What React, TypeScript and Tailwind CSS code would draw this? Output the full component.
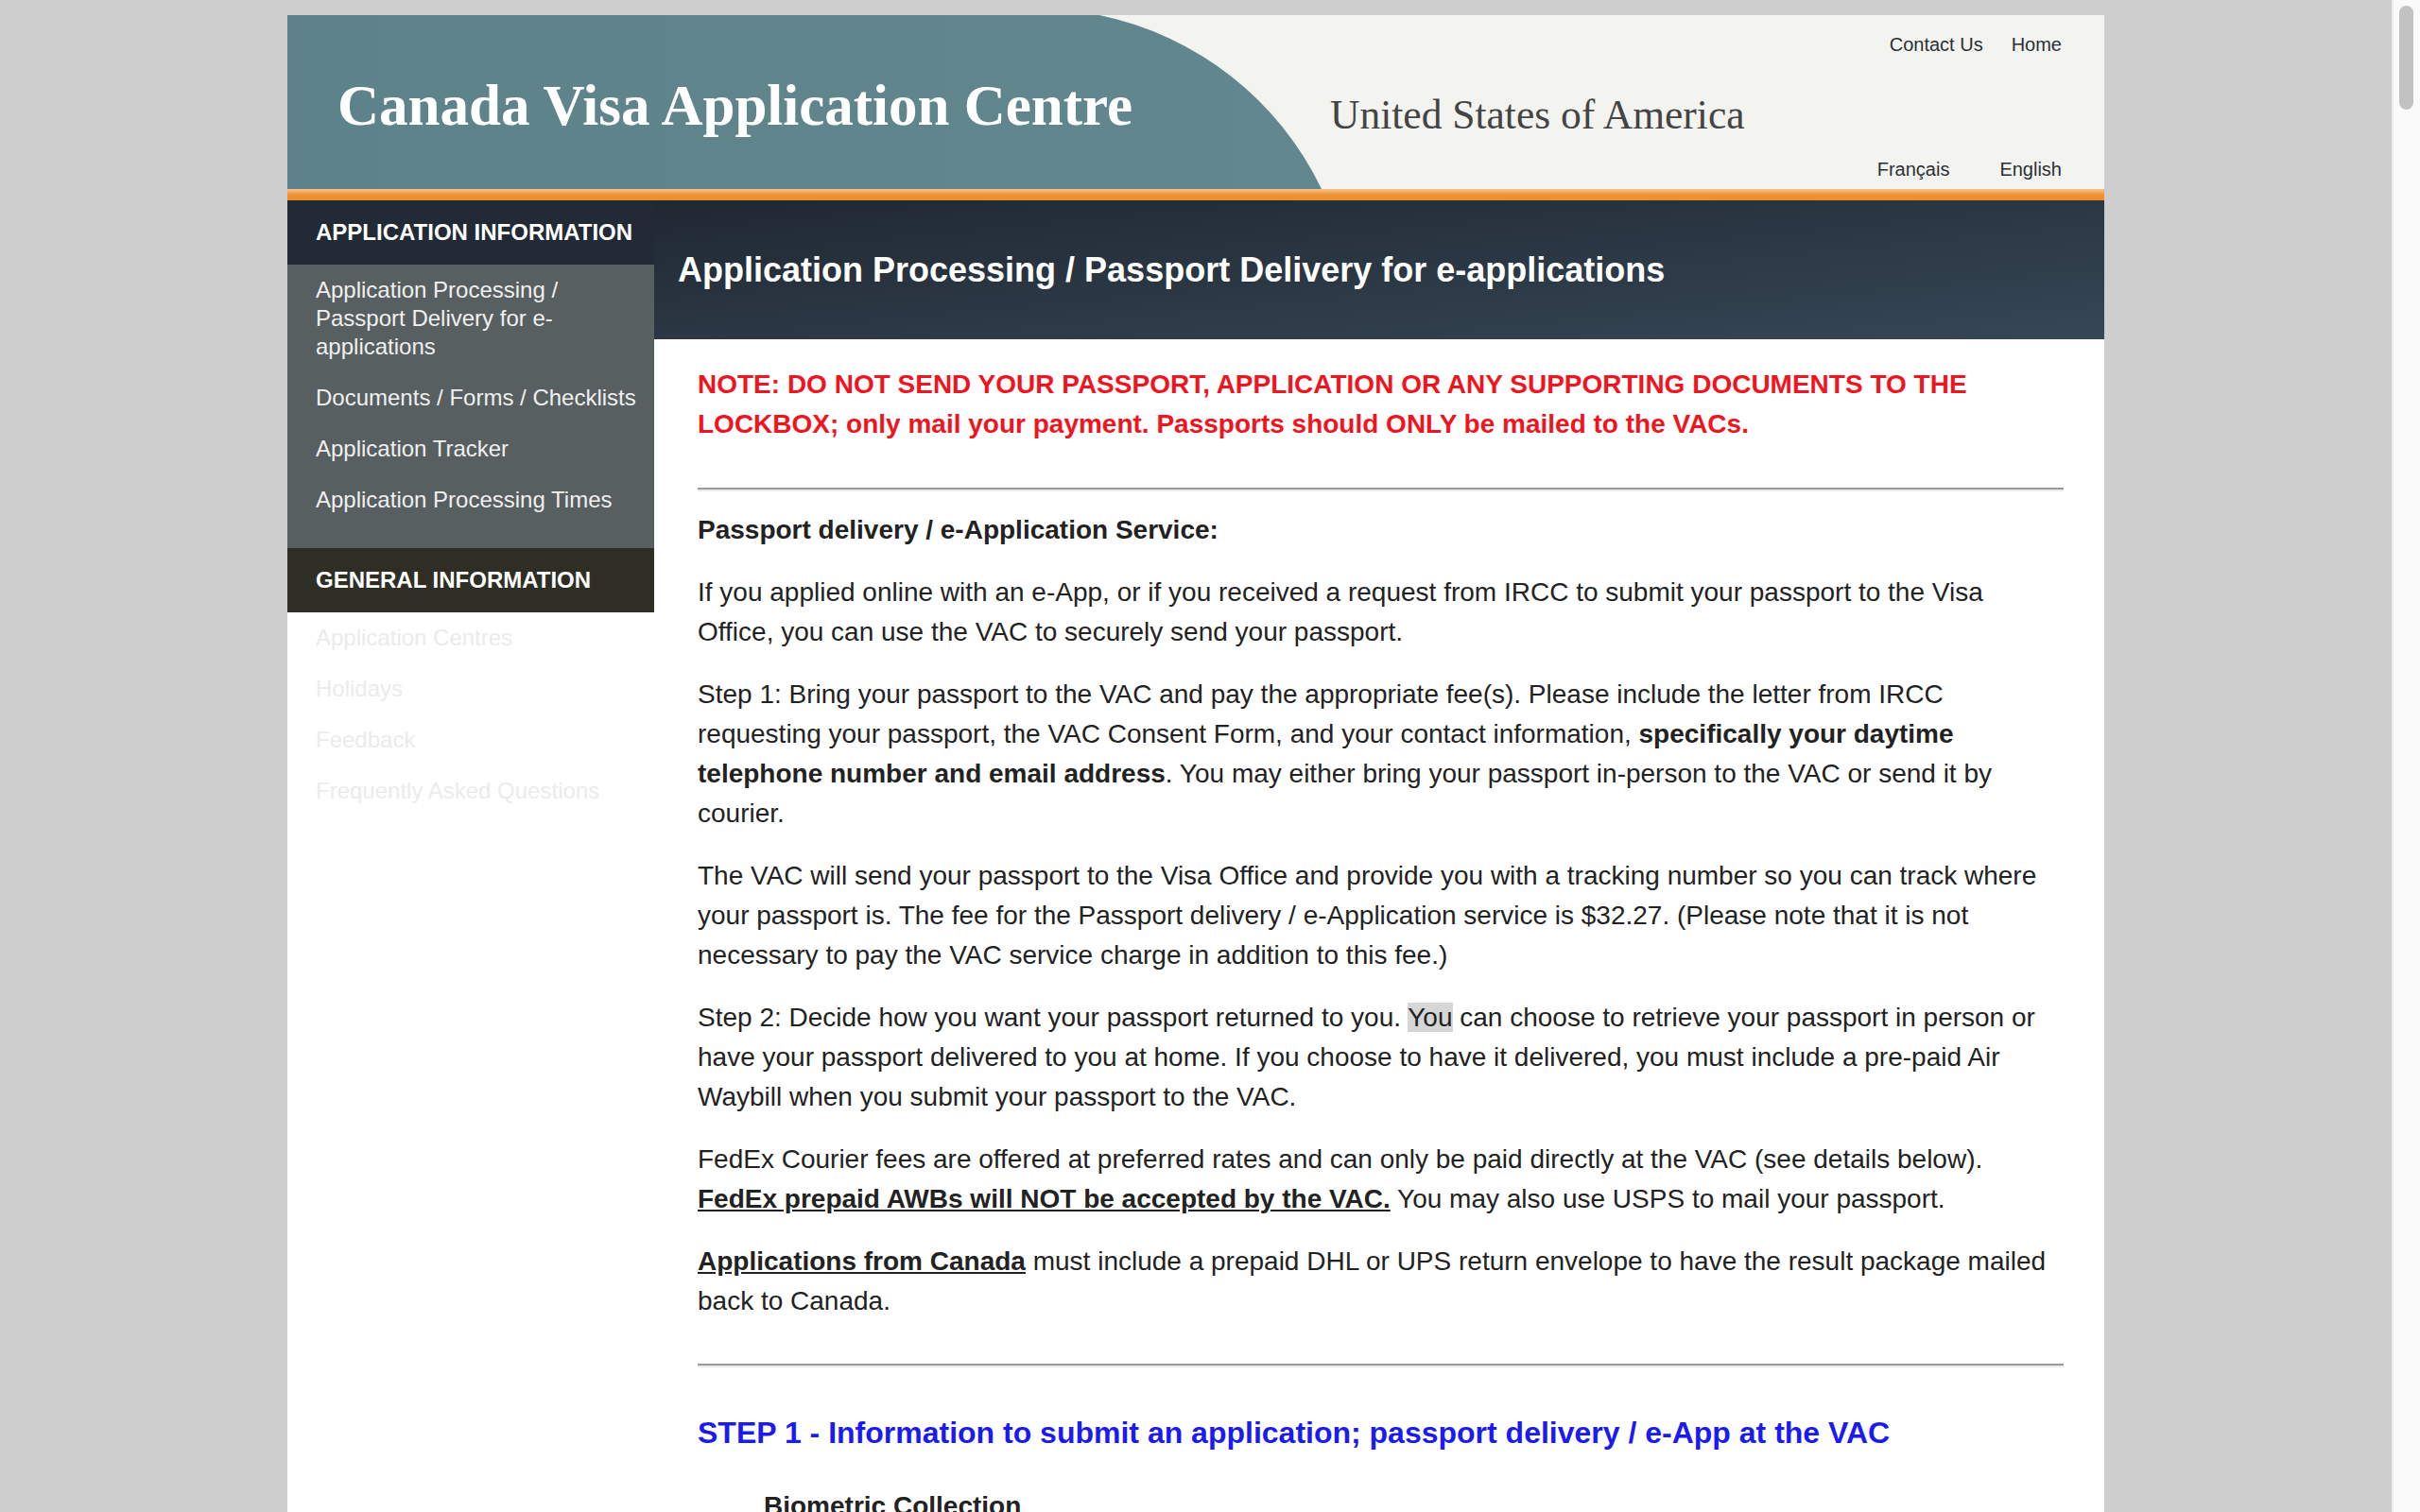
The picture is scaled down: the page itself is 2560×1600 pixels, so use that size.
const sans = { fontFamily: '"Liberation Sans", Arial, sans-serif' };

function SideItem({ label, dim }: { label: string; dim?: boolean }) {
  return (
    <li className={`py-3 pl-[30px] pr-[15px] text-[24px] leading-[30px] ${dim ? "text-[#ebebeb]" : "text-[#f0f0f0]"}`}>
      <a href="#">{label}</a>
    </li>
  );
}

function Header() {
  return (
    <header className="relative h-[184px] overflow-hidden bg-[#f3f3ef]">
      <svg className="absolute inset-0" width="1922" height="184" viewBox="0 0 1922 184">
        <defs>
          <linearGradient id="teal" x1="0" y1="0" x2="1" y2="0">
            <stop offset="0" stopColor="#5d828a" />
            <stop offset="1" stopColor="#62878f" />
          </linearGradient>
        </defs>
        <path d="M0 0 H859 A336 336 0 0 1 1094 184 H0 Z" fill="url(#teal)" />
      </svg>
      <div className="relative flex h-full">
        <div className="w-[1103px] shrink-0 pl-[53px] pt-[65px]">
          <h1
            className="text-[61px] font-bold leading-none text-white"
            style={{ fontFamily: '"Liberation Serif", Georgia, serif' }}
          >
            Canada Visa Application Centre
          </h1>
        </div>
        <div className="pt-[84px]">
          <p
            className="text-[43.5px] leading-none text-[#444]"
            style={{ fontFamily: '"Liberation Serif", Georgia, serif' }}
          >
            United States of America
          </p>
        </div>
        <div className="ml-auto flex flex-col items-end justify-between pb-[11px] pr-[45px] pt-[21px] text-[20px] leading-none text-[#2a2f36]">
          <div className="flex gap-[30px]">
            <a href="#">Contact Us</a>
            <a href="#">Home</a>
          </div>
          <div className="flex gap-[53px]">
            <a href="#">Français</a>
            <a href="#">English</a>
          </div>
        </div>
      </div>
    </header>
  );
}

function Sidebar() {
  return (
    <aside className="w-[388px] shrink-0">
      <h2 className="flex h-[68px] items-center bg-[#222a35] pl-[30px] text-[24px] font-bold text-white">
        APPLICATION INFORMATION
      </h2>
      <ul className="bg-[#575f60] pb-6">
        <SideItem label="Application Processing / Passport Delivery for e-applications" />
        <SideItem label="Documents / Forms / Checklists" />
        <SideItem label="Application Tracker" />
        <SideItem label="Application Processing Times" />
      </ul>
      <h2 className="flex h-[68px] items-center bg-[#2f2e25] pl-[30px] text-[24px] font-bold text-white">
        GENERAL INFORMATION
      </h2>
      <ul>
        <SideItem dim label="Application Centres" />
        <SideItem dim label="Holidays" />
        <SideItem dim label="Feedback" />
        <SideItem dim label="Frequently Asked Questions" />
      </ul>
    </aside>
  );
}

function Rule() {
  return <hr className="border-0 border-t-2 border-b-2 border-t-[#9a9a9a] border-b-[#ececec]" />;
}

export default function App() {
  return (
    <div className="flex h-screen overflow-hidden bg-[#cecece]" style={sans}>
      <div className="flex-1 overflow-hidden pt-4">
        <div className="mx-auto w-[1922px] bg-white">
          <Header />
          <div className="h-3 bg-linear-to-b from-[#f4c48a] via-[#ee9232] to-[#ec8e2c]" />
          <div className="flex">
            <Sidebar />
            <main className="min-w-0 flex-1">
              <div className="flex h-[147px] items-center bg-linear-to-br from-[#202832] to-[#364756] pl-[25px]">
                <h1 className="text-[36px] font-bold text-white">
                  Application Processing / Passport Delivery for e-applications
                </h1>
              </div>
              <div className="pb-20 pl-[46px] pr-[43px] pt-[27px] text-[28px] leading-[42px] text-[#222]">
                <p className="whitespace-nowrap font-bold text-[#f0141e]">
                  NOTE: DO NOT SEND YOUR PASSPORT, APPLICATION OR ANY SUPPORTING DOCUMENTS TO THE
                  <br />
                  LOCKBOX; only mail your payment. Passports should ONLY be mailed to the VACs.
                </p>
                <div className="mb-5 mt-[46px]">
                  <Rule />
                </div>
                <p className="mb-6 font-bold">Passport delivery / e-Application Service:</p>
                <p className="mb-6 whitespace-nowrap">
                  If you applied online with an e-App, or if you received a request from IRCC to submit your passport to the Visa
                  <br />
                  Office, you can use the VAC to securely send your passport.
                </p>
                <p className="mb-6 whitespace-nowrap">
                  Step 1: Bring your passport to the VAC and pay the appropriate fee(s). Please include the letter from IRCC
                  <br />
                  requesting your passport, the VAC Consent Form, and your contact information,{" "}
                  <strong>specifically your daytime</strong>
                  <br />
                  <strong>telephone number and email address</strong>. You may either bring your passport in-person to the VAC or send it by
                  <br />
                  courier.
                </p>
                <p className="mb-6 whitespace-nowrap">
                  The VAC will send your passport to the Visa Office and provide you with a tracking number so you can track where
                  <br />
                  your passport is. The fee for the Passport delivery / e-Application service is $32.27. (Please note that it is not
                  <br />
                  necessary to pay the VAC service charge in addition to this fee.)
                </p>
                <p className="mb-6 whitespace-nowrap">
                  Step 2: Decide how you want your passport returned to you.{" "}
                  <span className="bg-[#d6d6d6]">You</span> can choose to retrieve your passport in person or
                  <br />
                  have your passport delivered to you at home. If you choose to have it delivered, you must include a pre-paid Air
                  <br />
                  Waybill when you submit your passport to the VAC.
                </p>
                <p className="mb-6 whitespace-nowrap">
                  FedEx Courier fees are offered at preferred rates and can only be paid directly at the VAC (see details below).
                  <br />
                  <a href="#" className="font-bold underline">
                    FedEx prepaid AWBs will NOT be accepted by the VAC.
                  </a>{" "}
                  You may also use USPS to mail your passport.
                </p>
                <p className="whitespace-nowrap">
                  <a href="#" className="font-bold underline">
                    Applications from Canada
                  </a>{" "}
                  must include a prepaid DHL or UPS return envelope to have the result package mailed
                  <br />
                  back to Canada.
                </p>
                <div className="mt-[45px]">
                  <Rule />
                </div>
                <h2 className="mt-[48px] text-[32px] font-bold leading-[42px] text-[#1b1bf0]">
                  STEP 1 - Information to submit an application; passport delivery / e-App at the VAC
                </h2>
                <h3 className="mt-[36px] pl-[70px] font-bold">Biometric Collection</h3>
              </div>
            </main>
          </div>
        </div>
      </div>
      <div className="w-[30px] shrink-0 border-l-2 border-[#ececec] bg-[#fafafa] pl-[6px] pt-[6px]">
        <div className="h-[110px] w-[15px] rounded-full bg-[#c2c2c2]" />
      </div>
    </div>
  );
}
